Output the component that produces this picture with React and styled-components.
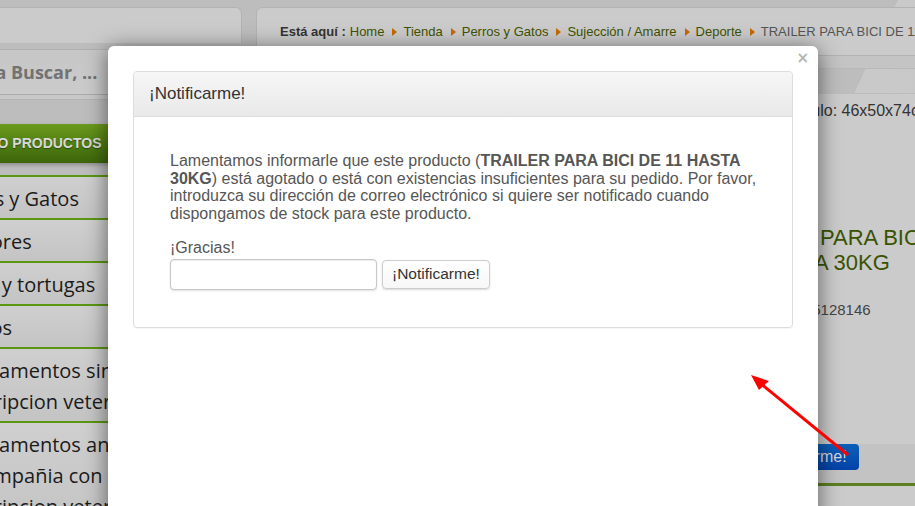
import React, {useState} from 'react';
import styled, {createGlobalStyle} from 'styled-components';

const GlobalStyle = createGlobalStyle`
  html, body {
    margin: 0;
    padding: 0;
    overflow: hidden;
    background: #bebebe;
    font-family: "Liberation Sans", Arial, sans-serif;
  }
`;

const Viewport = styled.div`
  position: relative;
  width: 915px;
  height: 506px;
  overflow: hidden;
  background: linear-gradient(115deg, #bdbdbd 0%, #bdbdbd 78%, #c9c9c9 78%, #c6c6c6 100%);
`;

const Page = styled.div`
  display: grid;
  grid-template-columns: 299px 1fr;
  gap: 14px;
  margin-left: -57px;
  padding-top: 7px;
`;

const LeftColumn = styled.div`
  display: flex;
  flex-direction: column;
`;

const TopPanel = styled.div`
  height: 35px;
  background: #cbcbcb;
  border: 1px solid #b3b3b3;
  border-bottom: none;
  border-radius: 0 6px 0 0;
`;

const SearchBar = styled.div`
  height: 44px;
  margin-top: 6px;
  background: linear-gradient(#c6c6c6, #cbcbcb);
  border-top: 1px solid #b0b0b0;
  border-bottom: 1px solid #a9a9a9;
  font-family: "Open Sans", sans-serif;
  font-weight: 700;
  font-size: 18px;
  line-height: 44px;
  color: #727272;
  padding-left: 22px;
  white-space: nowrap;
`;

const SearchUnder = styled.div`
  height: 4px;
  background: #c8c8c8;
  border-bottom: 1px solid #b4b4b4;
`;

const CategoryHeader = styled.div`
  margin-top: 24px;
  height: 39px;
  line-height: 39px;
  background: linear-gradient(#6c9a1d, #4b7a10 60%, #3e650b);
  color: #d9d9d9;
  font-weight: 700;
  font-size: 14px;
  text-indent: 5px;
  white-space: nowrap;
  text-shadow: 0 1px 1px rgba(0, 0, 0, 0.4);
  box-shadow: 0 2px 4px rgba(0, 0, 0, 0.25);
`;

const CategoryList = styled.ul`
  list-style: none;
  margin: 12px 0 0;
  padding: 0;
  border-top: 2px solid #5c9612;
`;

const CategoryItem = styled.li`
  padding: 6px 0 4px;
  line-height: 31px;
  font-family: "Open Sans", sans-serif;
  font-size: 20px;
  color: #1b1b1b;
  background: linear-gradient(#cfcfcf, #c4c4c4);
  border-bottom: 2px solid #5c9612;
  white-space: nowrap;
`;

const RightColumn = styled.div`
  display: flex;
  flex-direction: column;
`;

const BreadcrumbPanel = styled.div`
  height: 47px;
  background: #cbcbcb;
  border: 1px solid #b3b3b3;
  border-radius: 6px 0 0 0;
  display: flex;
  align-items: center;
  padding-left: 23px;
  font-size: 13px;
  white-space: nowrap;
`;

const Here = styled.span`
  font-weight: 700;
  color: #333;
  margin-right: 4px;
`;

const Crumb = styled.span`
  color: ${p => (p.$current ? '#555' : '#3f5200')};
`;

const Arrow = styled.span`
  display: inline-block;
  width: 0;
  height: 0;
  margin: 0 6px 0 8px;
  border-left: 5px solid #c56a00;
  border-top: 4px solid transparent;
  border-bottom: 4px solid transparent;
`;

const Band = styled.div`
  height: 12px;
  background: #c4c4c4;
  border-bottom: 1px solid #b8b8b8;
`;

const ProductArea = styled.div`
  display: grid;
  grid-template-columns: 437px 1fr;
  border-top: 1px solid #bdbdbd;
  margin-top: 24px;
  background: #cbcbcb;
  height: 420px;
`;

const Info = styled.div`
  display: flex;
  flex-direction: column;
  white-space: nowrap;
`;

const Dimensions = styled.div`
  margin-top: 8px;
  font-size: 16px;
  line-height: 18px;
  color: #333;
`;

const TitleLine = styled.div`
  font-size: 22px;
  line-height: 25px;
  color: #3a5300;
  padding-left: ${p => p.$indent}px;
`;

const Title = styled.div`
  margin-top: 105px;
`;

const Reference = styled.div`
  margin-top: 26px;
  font-size: 15px;
  line-height: 18px;
  color: #444;
  padding-left: 30px;
`;

const ButtonBand = styled.div`
  margin-top: 125px;
  height: 39px;
  background: #c3c3c3;
  border-bottom: 3px solid #5d7f22;
  margin-left: -100px;
  padding-left: 151px;
`;

const BlueButton = styled.button`
  display: block;
  height: 26px;
  padding: 0 12px;
  border: none;
  border-radius: 4px;
  background: linear-gradient(#0c5fb8, #0342a8);
  color: #d8d8d8;
  font-family: "Liberation Sans", Arial, sans-serif;
  font-size: 16px;
`;

const Modal = styled.div`
  position: absolute;
  left: 108px;
  top: 46px;
  width: 710px;
  height: 480px;
  box-sizing: border-box;
  padding: 25px;
  background: #fff;
  border-radius: 6px 6px 0 0;
  box-shadow: 0 3px 22px rgba(0, 0, 0, 0.55);
`;

const Close = styled.button`
  position: absolute;
  top: 3px;
  right: 9px;
  border: none;
  background: none;
  padding: 0;
  font-family: "DejaVu Sans", sans-serif;
  font-weight: 700;
  font-size: 15px;
  color: #b4b4b4;
`;

const Panel = styled.div`
  border: 1px solid #ddd;
  border-radius: 4px;
  box-shadow: 0 1px 1px rgba(0, 0, 0, 0.04);
`;

const PanelHeader = styled.div`
  height: 44px;
  line-height: 44px;
  padding-left: 15px;
  font-size: 17px;
  color: #333;
  background: linear-gradient(#f6f6f6, #e9e9e9);
  border-bottom: 1px solid #ddd;
  border-radius: 4px 4px 0 0;
`;

const PanelBody = styled.div`
  padding: 35px 40px 37px 36px;
  font-size: 16px;
  line-height: 1.1;
  color: #565656;
`;

const Message = styled.p`
  margin: 0 0 17px;
  width: 595px;
`;

const Thanks = styled.p`
  margin: 0 0 2px;
`;

const NotifyForm = styled.form`
  display: flex;
  align-items: center;
  gap: 5px;
`;

const EmailInput = styled.input`
  width: 207px;
  height: 31px;
  box-sizing: border-box;
  border: 1px solid #c8c8c8;
  border-radius: 4px;
  box-shadow: inset 0 1px 1px rgba(0, 0, 0, 0.08), 0 1px 2px rgba(0, 0, 0, 0.12);
  padding: 0 8px;
  font-size: 16px;
`;

const NotifyButton = styled.button`
  height: 29px;
  padding: 0 9px;
  border: 1px solid #cdcdcd;
  border-radius: 4px;
  background: linear-gradient(#fff, #f7f7f7);
  box-shadow: 0 1px 2px rgba(0, 0, 0, 0.15);
  font-family: "Liberation Sans", Arial, sans-serif;
  font-size: 15.5px;
  color: #333;
`;

const Annotation = styled.svg`
  position: absolute;
  left: 0;
  top: 0;
  pointer-events: none;
`;

const categories = [
  ['Perros y Gatos'],
  ['Roedores'],
  ['Peces y tortugas'],
  ['Pájaros'],
  ['Medicamentos sin', 'prescripcion veterinaria'],
  ['Medicamentos animales', 'de compañia con', 'prescripcion veterinaria'],
];

const crumbs = ['Home', 'Tienda', 'Perros y Gatos', 'Sujección / Amarre', 'Deporte'];

function App() {
  const [email, setEmail] = useState('');

  const onSubmit = (e) => {
    e.preventDefault();
  };

  return (
    <Viewport>
      <GlobalStyle />
      <Page>
        <LeftColumn>
          <TopPanel />
          <SearchBar>para Buscar, ...</SearchBar>
          <SearchUnder />
          <CategoryHeader>LISTADO PRODUCTOS</CategoryHeader>
          <CategoryList>
            {categories.map((lines, i) => (
              <CategoryItem key={i}>
                {lines.map((l, j) => (
                  <div key={j}>{l}</div>
                ))}
              </CategoryItem>
            ))}
          </CategoryList>
        </LeftColumn>

        <RightColumn>
          <BreadcrumbPanel>
            <Here>Está aquí :</Here>
            {crumbs.map((c) => (
              <React.Fragment key={c}>
                <Crumb>{c}</Crumb>
                <Arrow />
              </React.Fragment>
            ))}
            <Crumb $current>TRAILER PARA BICI DE 11 HASTA 30KG</Crumb>
          </BreadcrumbPanel>
          <Band />
          <ProductArea>
            <div />
            <Info>
              <Dimensions>Tamaño del artículo: 46x50x74cm</Dimensions>
              <Title>
                <TitleLine $indent={28}>TRAILER PARA BICI DE 11</TitleLine>
                <TitleLine $indent={64}>HASTA 30KG</TitleLine>
              </Title>
              <Reference>EAN: 8435405128146</Reference>
              <ButtonBand>
                <BlueButton>¡Notificarme!</BlueButton>
              </ButtonBand>
            </Info>
          </ProductArea>
        </RightColumn>
      </Page>

      <Modal>
        <Close>×</Close>
        <Panel>
          <PanelHeader>¡Notificarme!</PanelHeader>
          <PanelBody>
            <Message>
              Lamentamos informarle que este producto (<b>TRAILER PARA BICI DE 11 HASTA 30KG</b>) está
              agotado o está con existencias insuficientes para su pedido. Por favor, introduzca su
              dirección de correo electrónico si quiere ser notificado cuando dispongamos de stock
              para este producto.
            </Message>
            <Thanks>¡Gracias!</Thanks>
            <NotifyForm onSubmit={onSubmit}>
              <EmailInput value={email} onChange={(e) => setEmail(e.target.value)} />
              <NotifyButton>¡Notificarme!</NotifyButton>
            </NotifyForm>
          </PanelBody>
        </Panel>
      </Modal>

      <Annotation width="915" height="506">
        <line x1="848" y1="455" x2="760" y2="383" stroke="#ff0000" strokeWidth="3" />
        <polygon points="751,375 769,381 759,390" fill="#ff0000" />
      </Annotation>
    </Viewport>
  );
}

export default App;
